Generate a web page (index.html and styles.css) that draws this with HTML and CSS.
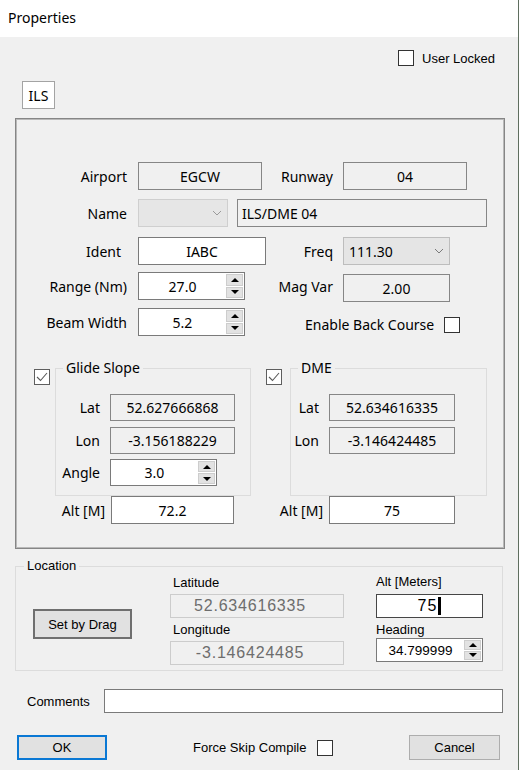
FILE: index.html
```html
<!DOCTYPE html>
<html lang="en">
<head>
<meta charset="UTF-8">
<meta name="viewport" content="width=device-width, initial-scale=1.0">
<title>Properties</title>
<link rel="stylesheet" href="styles.css">
</head>
<body>
    <div class="titlebar">Properties</div>

    <div class="lockrow ms">
        <span class="cb"></span>
        <span class="lock-text">User Locked</span>
    </div>

    <div class="tab">ILS</div>

    <div class="panel">
        <!-- runway / identity fields -->
        <div class="row r1">
            <span class="lbl">Airport</span>
            <span class="fcell"><span class="tb ro c w124">EGCW</span></span>
            <span class="lbl2">Runway</span>
            <span class="tb ro c w124">04</span>
        </div>
        <div class="row r2">
            <span class="lbl">Name</span>
            <span class="combo off w90">
                <span></span>
                <svg width="10" height="6" viewBox="0 0 10 6"><polyline points="1,1 5,5 9,1" fill="none" stroke="#9a9a9a" stroke-width="1"/></svg>
            </span>
            <span class="tb ro name w250">ILS/DME 04</span>
        </div>
        <div class="row r3">
            <span class="lbl narrow">Ident</span>
            <span class="fcell"><span class="tb c w128">IABC</span></span>
            <span class="lbl2">Freq</span>
            <span class="combo w107">
                <span>111.30</span>
                <svg width="10" height="6" viewBox="0 0 10 6"><polyline points="1,1 5,5 9,1" fill="none" stroke="#7a7a7a" stroke-width="1"/></svg>
            </span>
        </div>
        <div class="row r4">
            <span class="lbl">Range (Nm)</span>
            <span class="fcell">
                <span class="spin w107"><span class="val">27.0</span><span class="arrows"><i class="up"></i><i class="dn"></i></span></span>
            </span>
            <span class="lbl2">Mag Var</span>
            <span class="tb ro c w107 low">2.00</span>
        </div>
        <div class="row r5">
            <span class="lbl">Beam Width</span>
            <span class="fcell">
                <span class="spin w107"><span class="val">5.2</span><span class="arrows"><i class="up"></i><i class="dn"></i></span></span>
            </span>
            <span class="backcourse">Enable Back Course</span>
            <span class="cb bc"></span>
        </div>

        <!-- glide slope and dme groups -->
        <div class="navaids">
            <div class="col gs">
                <div class="grp-row">
                    <span class="cb on">
                        <svg width="14" height="14" viewBox="0 0 14 14"><polyline points="2,7 5.5,10.5 12,3" fill="none" stroke="#5a5a5a" stroke-width="1.1"/></svg>
                    </span>
                    <fieldset class="grp">
                        <legend>Glide Slope</legend>
                        <div class="grp-body">
                            <div class="grow">
                                <span class="glbl">Lat</span>
                                <span class="tb ro c w125">52.627666868</span>
                            </div>
                            <div class="grow">
                                <span class="glbl">Lon</span>
                                <span class="tb ro c w125">-3.156188229</span>
                            </div>
                            <div class="grow g3">
                                <span class="glbl">Angle</span>
                                <span class="spin w107"><span class="val">3.0</span><span class="arrows"><i class="up"></i><i class="dn"></i></span></span>
                            </div>
                        </div>
                    </fieldset>
                </div>
                <div class="altrow">
                    <span class="alt-lbl">Alt [M]</span>
                    <span class="tb c w123">72.2</span>
                </div>
            </div>

            <div class="col dme">
                <div class="grp-row">
                    <span class="cb on">
                        <svg width="14" height="14" viewBox="0 0 14 14"><polyline points="2,7 5.5,10.5 12,3" fill="none" stroke="#5a5a5a" stroke-width="1.1"/></svg>
                    </span>
                    <fieldset class="grp">
                        <legend>DME</legend>
                        <div class="grp-body">
                            <div class="grow">
                                <span class="glbl">Lat</span>
                                <span class="tb ro c w126">52.634616335</span>
                            </div>
                            <div class="grow">
                                <span class="glbl">Lon</span>
                                <span class="tb ro c w126">-3.146424485</span>
                            </div>
                        </div>
                    </fieldset>
                </div>
                <div class="altrow">
                    <span class="alt-lbl">Alt [M]</span>
                    <span class="tb c w126">75</span>
                </div>
            </div>
        </div>
    </div>

    <fieldset class="location ms">
        <legend>Location</legend>
        <div class="loc-body">
            <div class="btn drag">Set by Drag</div>
            <div class="loc-col">
                <div class="loc-lbl">Latitude</div>
                <div class="tb dis big">52.634616335</div>
                <div class="loc-lbl gap">Longitude</div>
                <div class="tb dis big">-3.146424485</div>
            </div>
            <div class="loc-col2">
                <div class="loc-lbl first">Alt [Meters]</div>
                <div class="tb focus c">75<span class="caret"></span></div>
                <div class="loc-lbl gap">Heading</div>
                <div class="spin small"><span class="val">34.799999</span><span class="arrows"><i class="up"></i><i class="dn"></i></span></div>
            </div>
        </div>
    </fieldset>

    <div class="comments ms">
        <span class="comments-lbl">Comments</span>
        <span class="tb wide"></span>
    </div>

    <div class="actions ms">
        <div class="btn ok">OK</div>
        <span class="skip">Force Skip Compile</span>
        <span class="cb skip-cb"></span>
        <div class="btn cancel">Cancel</div>
    </div>
</body>
</html>
```

FILE: styles.css
```css
* {
    box-sizing: border-box;
}
body {
    margin: 0;
    width: 519px;
    height: 770px;
    overflow: hidden;
    background-color: #f0f0f0;
    border-right: 1px solid #5f6e5f;
    font-family: "Noto Sans", sans-serif;
    font-size: 14px;
    color: #000;
}
.ms {
    font-family: "Liberation Sans", Arial, sans-serif;
    font-size: 13px;
}
.titlebar {
    height: 37px;
    background-color: #fff;
    padding-left: 8px;
    line-height: 36px;
    font-size: 14px;
}

/* checkboxes */
.cb {
    display: inline-flex;
    align-items: center;
    justify-content: center;
    width: 16px;
    height: 16px;
    flex: none;
    background-color: #fff;
    border: 1px solid #333;
}
.cb.on {
    border-color: #5e5e5e;
}

.lockrow {
    display: flex;
    align-items: center;
    justify-content: flex-end;
    height: 16px;
    margin-top: 13px;
    padding-right: 23px;
}
.lock-text {
    margin-left: 8px;
}

.tab {
    display: flex;
    align-items: center;
    justify-content: center;
    width: 33px;
    height: 28px;
    margin: 15px 0 0 22px;
    background-color: #fff;
    border: 1px solid #a3a3a3;
}

.panel {
    width: 490px;
    height: 431px;
    margin: 9px 0 0 15px;
    padding-top: 43px;
    border: 1px solid #868686;
    box-shadow: inset 0 0 0 1px #b9b9b9;
}

/* form rows */
.row {
    display: flex;
    align-items: center;
    height: 28px;
    padding-left: 1px;
}
.r2 { margin-top: 9px; }
.r3 { margin-top: 10px; }
.r4 { margin-top: 7px; }
.r5 { margin-top: 8px; }
.lbl {
    width: 121px;
    padding-right: 11px;
    text-align: right;
}
.lbl.narrow {
    padding-right: 17px;
}
.fcell {
    display: flex;
    width: 128px;
}
.lbl2 {
    width: 77px;
    padding-right: 10px;
    text-align: right;
}
.backcourse {
    margin: 5px 0 0 39px;
}
.cb.bc {
    margin: 5px 0 0 10px;
}

/* text boxes */
.tb {
    display: flex;
    align-items: center;
    height: 28px;
    background-color: #fff;
    border: 1px solid #7a7a7a;
    white-space: nowrap;
}
.tb.c {
    justify-content: center;
}
.tb.ro {
    background-color: #f0f0f0;
    border-color: #868686;
}
.tb.name {
    margin-left: 9px;
    padding-left: 4px;
}
.tb.low {
    margin-top: 4px;
}
.w90 { width: 90px; }
.w107 { width: 107px; }
.w123 { width: 123px; }
.w124 { width: 124px; }
.w125 { width: 125px; }
.w126 { width: 126px; }
.w128 { width: 128px; }
.w250 { width: 250px; }

.combo {
    display: flex;
    align-items: center;
    justify-content: space-between;
    height: 28px;
    padding: 0 5px 0 5px;
    background-color: #e5e5e5;
    border: 1px solid #bdbdbd;
}
.combo.off {
    background-color: #e6e6e6;
    border-color: #cfcfcf;
}

/* spin boxes */
.spin {
    display: flex;
    height: 28px;
    background-color: #fff;
    border: 1px solid #7a7a7a;
}
.spin .val {
    display: flex;
    flex: 1;
    align-items: center;
    justify-content: center;
}
.arrows {
    display: flex;
    flex-direction: column;
    width: 17px;
    margin: 1px 1px 1px 0;
    gap: 1px;
}
.arrows i {
    display: flex;
    flex: 1;
    align-items: center;
    justify-content: center;
    background-color: #e2e2e2;
    border: 1px solid #cdcdcd;
}
.arrows .up::after,
.arrows .dn::after {
    content: "";
    border-left: 4px solid transparent;
    border-right: 4px solid transparent;
}
.arrows .up::after {
    border-bottom: 4px solid #000;
}
.arrows .dn::after {
    border-top: 4px solid #000;
}

/* glide slope / dme */
.navaids {
    display: flex;
    margin-top: 22px;
    padding-left: 18px;
}
.col.gs {
    width: 217px;
}
.col.dme {
    width: 221px;
    margin-left: 15px;
}
.grp-row {
    display: flex;
    align-items: flex-start;
}
.grp-row .cb {
    margin-top: 11px;
}
.gs .grp-row .cb {
    margin-right: 5px;
}
.dme .grp-row .cb {
    margin-right: 8px;
}
.grp {
    flex: 1;
    min-width: 0;
    height: 138px;
    margin: 0;
    padding: 0;
    border: 1px solid #dcdcdc;
}
.grp legend {
    margin-left: 7px;
    padding: 0 3px;
    line-height: 20px;
}
.grp-body {
    padding-top: 16px;
}
.grow {
    display: flex;
    align-items: center;
    height: 27px;
    margin-top: 6px;
}
.grow:first-child {
    margin-top: 0;
}
.grow.g3 {
    margin-top: 5px;
}
.grow .tb,
.grow .spin {
    height: 27px;
}
.gs .glbl {
    width: 54px;
}
.dme .glbl {
    width: 38px;
}
.glbl {
    padding-right: 10px;
    text-align: right;
}
.altrow {
    display: flex;
    align-items: center;
    height: 28px;
}
.alt-lbl {
    padding-right: 6px;
    text-align: right;
}
.gs .alt-lbl {
    width: 77px;
}
.dme .alt-lbl {
    width: 63px;
}

/* location group */
.location {
    width: 488px;
    height: 113px;
    margin: 9px 0 0 15px;
    padding: 0;
    border: 1px solid #dcdcdc;
}
.location legend {
    margin-left: 8px;
    padding: 0 3px;
    line-height: 16px;
}
.loc-body {
    display: flex;
    padding-left: 17px;
}
.btn {
    display: flex;
    align-items: center;
    justify-content: center;
    background-color: #e1e1e1;
    border: 1px solid #adadad;
}
.btn.drag {
    width: 99px;
    height: 30px;
    margin-top: 35px;
    border: 2px solid #6f6f6f;
}
.loc-col {
    width: 174px;
    margin-left: 38px;
}
.loc-col2 {
    width: 107px;
    margin-left: 32px;
}
.loc-lbl {
    line-height: 16px;
}
.loc-col .loc-lbl {
    margin-left: 3px;
}
.loc-col .loc-lbl:first-child {
    margin-top: 1px;
}
.loc-lbl.gap {
    margin-top: 4px;
}
.loc-col .tb,
.loc-col2 .tb {
    height: 24px;
    margin-top: 3px;
}
.loc-col2 .tb {
    margin-top: 4px;
}
.tb.dis {
    justify-content: center;
    padding-right: 14px;
    background-color: #f0f0f0;
    border-color: #cccccc;
    color: #6d6d6d;
}
.tb.big {
    font-size: 16px;
    letter-spacing: 0.8px;
}
.tb.focus {
    font-size: 16px;
    letter-spacing: 1px;
    border-color: #464646;
}
.caret {
    display: inline-block;
    width: 3px;
    height: 18px;
    margin-left: 1px;
    background-color: #000;
}
.spin.small {
    height: 24px;
    font-size: 13.5px;
}

/* bottom rows */
.comments {
    display: flex;
    align-items: center;
    height: 24px;
    margin-top: 18px;
    padding-left: 27px;
}
.comments-lbl {
    width: 77px;
}
.tb.wide {
    width: 399px;
    height: 24px;
}
.actions {
    display: flex;
    align-items: center;
    height: 25px;
    margin-top: 22px;
    padding: 0 18px 0 17px;
}
.btn.ok {
    width: 90px;
    height: 25px;
    border: 2px solid #0a78d4;
}
.skip {
    margin-left: 86px;
}
.cb.skip-cb {
    margin-left: 11px;
}
.btn.cancel {
    width: 91px;
    height: 25px;
    margin-left: auto;
}
```
